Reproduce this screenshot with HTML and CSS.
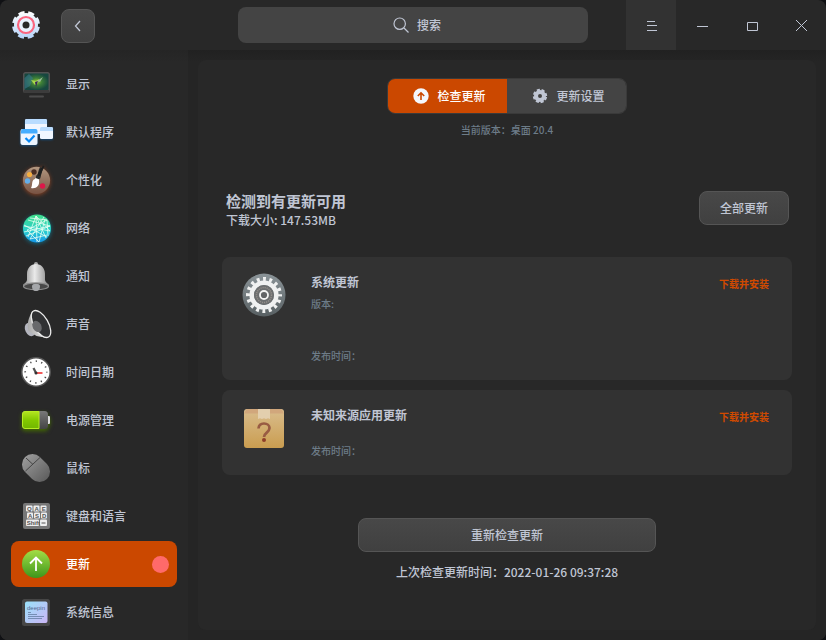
FILE: index.html
```html
<!DOCTYPE html>
<html lang="zh-CN">
<head>
<meta charset="utf-8">
<meta name="viewport" content="width=device-width, initial-scale=1">
<title>控制中心</title>
<link rel="stylesheet" href="styles.css">
</head>
<body>
<div class="window">
  <header class="titlebar">
    <div class="titlebar-start">
      <svg class="logo" viewBox="0 0 28 28" aria-hidden="true">
        <defs><linearGradient id="lg" gradientUnits="userSpaceOnUse" x1="0" y1="0" x2="0" y2="28"><stop stop-color="#fff"/><stop offset="1" stop-color="#b4d4fa"/></linearGradient></defs>
        <circle cx="14" cy="14" r="12" fill="url(#lg)"/>
        <circle cx="14" cy="14" r="12.300" fill="none" stroke="url(#lg)" stroke-width="3.400" stroke-dasharray="6 3.660" stroke-dashoffset="-1.830"/>
        <circle cx="14" cy="14" r="8" fill="#eaf2ff" stroke="#fa6680" stroke-width="2.200"/>
        <circle cx="14" cy="14" r="3.500" fill="#282828"/>
      </svg>
      <button class="btn back" type="button" aria-label="返回">
        <svg width="16" height="16" viewBox="0 0 16 16"><path d="M10 3 5.500 8 10 13" fill="none" stroke="#c0c6d4" stroke-width="1.300"/></svg>
      </button>
    </div>
    <label class="search">
      <svg width="16" height="16" viewBox="0 0 16 16" fill="none" stroke="#c0c6d4" stroke-width="1.200"><circle cx="6.700" cy="6.700" r="5.700"/><path d="m11 11 4.500 4.500"/></svg>
      <input type="text" placeholder="搜索" aria-label="搜索">
    </label>
    <div class="controls">
      <button class="control active" type="button" aria-label="菜单"><svg width="14" height="14" viewBox="-2 -2 14 14"><path d="M1 1.500h8M1 5.500h10M1 10.500h10"/></svg></button>
      <button class="control" type="button" aria-label="最小化"><svg width="14" height="14" viewBox="-2 -2 14 14"><path d="M1 6.500h11"/></svg></button>
      <button class="control" type="button" aria-label="最大化"><svg width="14" height="14" viewBox="-2 -2 14 14"><path d="M1.500 2.500h10v8h-10z"/></svg></button>
      <button class="control" type="button" aria-label="关闭"><svg width="14" height="14" viewBox="-2 -2 14 14"><path d="m0 0 11 11m0-11-11 11"/></svg></button>
    </div>
  </header>

  <div class="body">
    <nav class="sidebar">
      <a class="item" href="#display">
        <svg class="icon" viewBox="0 0 36 36">
          <defs><radialGradient id="scr"><stop stop-color="#9cc934"/><stop offset=".45" stop-color="#3b7d38"/><stop offset="1" stop-color="#17473f"/></radialGradient></defs>
          <rect x="5" y="6" width="27" height="21" rx="2.500" fill="#525252"/><rect x="5.500" y="24" width="26" height="3" rx="1" fill="#3c3c3c"/>
          <rect x="6.500" y="7.500" width="24" height="16.500" rx="1" fill="url(#scr)"/><path d="M6.500 12 11 8l4 4-3 8-5.500 3z" fill="#397b8c" opacity=".6"/>
          <path d="m13 14 5 1 3-2-1 4-3 2z" fill="#a9d84c"/><path d="m17 16 3-1-2 6z" fill="#36265b"/><path d="m19 15 6-4-3 5z" fill="#9bbb9d"/>
          <path d="M12 30.500h13" stroke="#4c4c4c" stroke-width="2" stroke-linecap="round"/>
        </svg>
        <span>显示</span></a>
      <a class="item" href="#apps">
        <svg class="icon glow-soft" viewBox="0 0 36 36">
          <rect x="7" y="5" width="22" height="15" rx="1.500" fill="#f1f6ff"/><path d="M7 10V6.500Q7 5 8.500 5h19Q29 5 29 6.500V10z" fill="#b9dcff"/>
          <rect x="22" y="13" width="13" height="12" rx="1.500" fill="#f1f6ff"/><path d="M22 17v-2.500q0-1.500 1.500-1.500h10q1.500 0 1.500 1.500V17z" fill="#b9dcff"/>
          <rect x="2.500" y="15" width="17" height="16" rx="2" fill="#edf5ff"/><path d="M3 19.500V17q0-2 2-2h12.500q2 0 2 2v2.500z" fill="#45adff"/>
          <path d="m7.500 24 3.500 3.500 5.500-6" fill="none" stroke="#0788f5" stroke-width="2.200"/>
        </svg>
        <span>默认程序</span></a>
      <a class="item" href="#personal">
        <svg class="icon glow-brown" viewBox="0 0 36 36">
          <defs><linearGradient id="pal" x2="0" y2="1"><stop stop-color="#b29780"/><stop offset="1" stop-color="#785343"/></linearGradient></defs>
          <circle cx="18.500" cy="18.300" r="13.600" fill="url(#pal)"/><path d="M20 17q-1-6 2-12l3 1-3 11z" fill="#282828"/>
          <circle cx="16" cy="10" r="2.700" fill="#4b2d22"/><circle cx="11.500" cy="12.500" r="2.600" fill="#f6ae3f"/><circle cx="9.500" cy="19" r="2.700" fill="#64aeea"/><circle cx="24.500" cy="24" r="2.700" fill="#de1749"/>
          <path d="m18.500 14 3 1.500 2.500-6 2.500-5-1.500-1-3 4.500z" fill="#1f1f1f"/><path d="m18.500 13.500 3.500 1.500-1 3c1 6-3 9-8 8 2-3 0-8 4-9z" fill="#fff"/><path d="m18.500 13 4 1.500-1 3-4-1.500z" fill="#292929"/>
        </svg>
        <span>个性化</span></a>
      <a class="item" href="#network">
        <svg class="icon glow-blue" viewBox="0 0 36 36">
          <defs><linearGradient id="net" x2="0" y2="1"><stop stop-color="#3fe08a"/><stop offset=".6" stop-color="#28cdd0"/><stop offset="1" stop-color="#1595e8"/></linearGradient></defs>
          <circle cx="19" cy="18.500" r="14" fill="url(#net)"/>
          <path d="m18 6-8 21M18 6l10 22M18 6l1 26M6 15l23 12M6 22l26-6M10 10l22 6-24 10M29 10 9 20l12 12 6-23M18 6l14 15-26-5M26 7 12 29l17-4M12 8l17 2 1 16" fill="none" stroke="#e4fff3" stroke-width=".8"/>
        </svg>
        <span>网络</span></a>
      <a class="item" href="#notify">
        <svg class="icon" viewBox="0 0 36 36">
          <defs><linearGradient id="bell"><stop stop-color="#8e8e8e"/><stop offset=".45" stop-color="#eaeaea"/><stop offset="1" stop-color="#858585"/></linearGradient></defs>
          <circle cx="18" cy="6" r="2" fill="#aaa"/>
          <path d="M5 28c0-3 3-2 4-6V16c0-6 4-10 9-10s9 4 9 10v6c1 4 4 3 4 6z" fill="url(#bell)"/>
          <ellipse cx="18" cy="28.300" rx="12.500" ry="3.400" fill="#484848" stroke="#8c8c8c" stroke-width="1.200"/><path d="M14 28c0-3 8-3 8 0s-1 5-4 5-4-2-4-5z" fill="#a5a7aa"/>
        </svg>
        <span>通知</span></a>
      <a class="item" href="#sound">
        <svg class="icon" viewBox="0 0 36 36">
          <defs><linearGradient id="spk"><stop stop-color="#aaa"/><stop offset="1" stop-color="#eee"/></linearGradient></defs>
          <ellipse cx="12" cy="23.500" rx="4.800" ry="7" transform="rotate(-25 12 23.500)" fill="#b4b5be"/><path d="M14.500 5c-4 7-6 13-4 20l8 5 11 2z" fill="url(#spk)"/>
          <ellipse cx="23" cy="18" rx="7.200" ry="15" transform="rotate(-30 23 18)" fill="#303133" stroke="#ececec" stroke-width="1.300"/>
          <ellipse cx="19" cy="20.500" rx="4.300" ry="6" transform="rotate(-30 19 20.500)" fill="#68696c"/>
        </svg>
        <span>声音</span></a>
      <a class="item" href="#time">
        <svg class="icon" viewBox="0 0 36 36">
          <circle cx="18" cy="18" r="14.200" fill="#fff" stroke="#555" stroke-width="1.500"/>
          <circle cx="18" cy="18" r="10.800" fill="none" stroke="#444" stroke-width="1.700" stroke-dasharray="1.200 4.455" stroke-dashoffset=".6"/>
          <path d="m15.500 14 2.500 5" stroke="#555" stroke-width="2.200"/><path d="M18 19h6.500" stroke="#f35a5a" stroke-width="2"/><circle cx="18" cy="19" r="1.500" fill="#333"/>
        </svg>
        <span>时间日期</span></a>
      <a class="item" href="#power">
        <svg class="icon glow-green" viewBox="0 0 36 36">
          <defs><linearGradient id="bat" x2="0" y2="1"><stop stop-color="#b3e521"/><stop offset=".5" stop-color="#83c900"/><stop offset="1" stop-color="#71b600"/></linearGradient><linearGradient id="shell" x2="0" y2="1"><stop stop-color="#797979"/><stop offset="1" stop-color="#444"/></linearGradient></defs>
          <rect x="4" y="9" width="26" height="18" rx="3.500" fill="url(#shell)"/><path d="M21 9.500H7Q4.500 9.500 4.500 12v12q0 2.500 2.500 2.500h14z" fill="url(#bat)" stroke="#b7ed23"/>
          <path d="M30 14h1q1 0 1 1v6q0 1-1 1h-1z" fill="#ddd"/>
        </svg>
        <span>电源管理</span></a>
      <a class="item" href="#mouse">
        <svg class="icon" viewBox="0 0 36 36">
          <defs><linearGradient id="mou" x2="0" y2="1"><stop stop-color="#999"/><stop offset="1" stop-color="#606060"/></linearGradient></defs>
          <rect x="7.500" y="2.500" width="21" height="31" rx="10.500" transform="rotate(-45 18 18)" fill="url(#mou)"/>
          <path d="M7.500 21 22 7.500M8 8l7 6.500" fill="none" stroke="#444" stroke-width="1"/>
        </svg>
        <span>鼠标</span></a>
      <a class="item" href="#keyboard">
        <svg class="icon" viewBox="0 0 36 36">
          <rect x="5" y="5" width="27" height="26" rx="2" fill="#777"/>
          <g fill="#eee"><rect x="8" y="7.500" width="6.500" height="6" rx="1"/><rect x="15.500" y="7.500" width="6" height="6" rx="1"/><rect x="22.500" y="7.500" width="6" height="6" rx="1"/><rect x="9" y="14.500" width="6" height="6" rx="1"/><rect x="16" y="14.500" width="6" height="6" rx="1"/><rect x="23" y="14.500" width="6" height="6" rx="1"/><rect x="8" y="21.500" width="13" height="6.500" rx="1"/><rect x="22" y="21.500" width="7" height="6.500" rx="1"/></g>
          <g class="keys"><text x="9" y="12.700">Q</text><text x="16.500" y="12.700">A</text><text x="23.700" y="12.700">E</text><text x="10" y="19.700">A</text><text x="17" y="19.700">S</text><text x="24" y="19.700">D</text><text x="8.700" y="27">Shift</text></g><path d="M23.500 25h4" stroke="#555"/>
        </svg>
        <span>键盘和语言</span></a>
      <a class="item current" href="#update" aria-current="page">
        <svg class="icon" viewBox="0 0 36 36">
          <defs><linearGradient id="upd" x2="0" y2="1"><stop stop-color="#a3dd45"/><stop offset="1" stop-color="#3d961b"/></linearGradient></defs>
          <circle cx="18" cy="18" r="14" fill="url(#upd)"/><path d="M18 25V12m-6 5.500 6-6 6 6" fill="none" stroke="#fff" stroke-width="1.800"/>
        </svg>
        <span>更新</span><i class="dot"></i></a>
      <a class="item" href="#info">
        <svg class="icon" viewBox="0 0 36 36">
          <defs><linearGradient id="inf" x2="1" y2="1"><stop stop-color="#9ae1fa"/><stop offset="1" stop-color="#cbb5f5"/></linearGradient></defs>
          <rect x="4" y="5" width="28" height="27" rx="2.500" fill="#464646"/><rect x="7" y="7.500" width="22.500" height="21.500" rx="2" fill="url(#inf)"/>
          <text class="chip" x="9" y="15.500">deepin</text><path d="M10 18.500h3M10 20.500h9M10 22.500h16M10 24.500h14" stroke="#667da2" stroke-width=".8"/>
        </svg>
        <span>系统信息</span></a>
    </nav>

    <main class="main">
      <section class="panel">
        <div class="tabs">
          <button class="tab selected" type="button"><svg width="16" height="16" viewBox="0 0 16 16"><circle cx="8" cy="8" r="7.700" fill="#f4f7fd"/><path d="M8 12V5M4.800 8 8 4.800 11.200 8" fill="none" stroke="#cb4800" stroke-width="1.600"/></svg>检查更新</button>
          <button class="tab" type="button"><svg width="16" height="16" viewBox="0 0 16 16" fill="none" stroke="#c0c6d4"><circle cx="8" cy="8" r="4" stroke-width="4"/><circle cx="8" cy="8" r="6" stroke-width="2.400" stroke-dasharray="3 1.710" stroke-dashoffset="-.860"/></svg>更新设置</button>
        </div>
        <p class="version">当前版本：桌面 20.4</p>

        <div class="summary">
          <div>
            <h1>检测到有更新可用</h1>
            <p>下载大小: 147.53MB</p>
          </div>
          <button class="btn update-all" type="button">全部更新</button>
        </div>

        <article class="card">
          <svg class="card-icon" viewBox="0 0 48 48">
            <defs><linearGradient id="sys" gradientUnits="userSpaceOnUse" x1="0" y1="3" x2="0" y2="45"><stop stop-color="#8a9397"/><stop offset="1" stop-color="#596164"/></linearGradient></defs>
            <circle cx="24" cy="24" r="21.500" fill="url(#sys)"/>
            <circle cx="24" cy="24" r="12.300" fill="none" stroke="#f0f1f1" stroke-width="4.600"/>
            <circle cx="24" cy="24" r="16" fill="none" stroke="#f0f1f1" stroke-width="4" stroke-dasharray="2.900 3.383" stroke-dashoffset="1.450"/>
            <circle cx="24" cy="24" r="10" fill="#6c6e6f"/>
            <circle cx="24" cy="24" r="7.500" fill="none" stroke="#918d89" stroke-width="1.500" stroke-dasharray="1.200 .9"/>
            <circle cx="24" cy="24" r="4" fill="#626466" stroke="#f3f3f3" stroke-width="1.800"/>
          </svg>
          <div class="info">
            <h2>系统更新</h2>
            <p>版本:</p>
            <p class="date-far">发布时间：</p>
          </div>
          <a class="install" href="#install-system">下载并安装</a>
        </article>

        <article class="card">
          <svg class="card-icon" viewBox="0 0 48 48">
            <defs><linearGradient id="box" x2="0" y2="1"><stop stop-color="#d9bd8d"/><stop offset="1" stop-color="#ca9d50"/></linearGradient></defs>
            <rect x="4" y="5" width="40" height="39" rx="3" fill="url(#box)"/><path d="M4 9.500 6 6q.5-1 2-1h32q1.500 0 2 1l2 3.500z" fill="#d1a77c"/>
            <path d="M18 5h12v10l-2-.8-2 .8-2-.8-2 .8-2-.8-2 .8z" fill="#e3cfae"/>
            <path d="M18.500 24.500c.3-3.500 2.500-5 5.500-5s5.500 1.700 5.500 4.600c0 4.700-5.500 4.300-5.500 9" fill="none" stroke="#985b43" stroke-width="2.700"/><circle cx="24" cy="36" r="2" fill="#8e3e29"/>
          </svg>
          <div class="info">
            <h2>未知来源应用更新</h2>
            <p class="date-near">发布时间：</p>
          </div>
          <a class="install" href="#install-unknown">下载并安装</a>
        </article>

        <button class="btn recheck" type="button">重新检查更新</button>
        <p class="last">上次检查更新时间：2022-01-26 09:37:28</p>
      </section>
    </main>
  </div>
</div>
</body>
</html>
```
FILE: styles.css
```css
* { box-sizing: border-box; }

body {
  margin: 0;
  background: #101114;
  color: #c0c6d4;
  font: 500 12px/18px "Noto Sans CJK SC", sans-serif;
}

h1, h2, p { margin: 0; }
button, input { font: inherit; color: inherit; }
a { color: inherit; text-decoration: none; }
svg { display: block; flex: none; }

.window {
  display: flex;
  flex-direction: column;
  min-height: 100vh;
  border-radius: 8px;
  overflow: hidden;
  background: #282828;
}

/* Title bar */
.titlebar {
  display: grid;
  grid-template-columns: 1fr minmax(120px, 350px) 1fr;
  align-items: center;
  height: 50px;
}

.titlebar-start {
  display: flex;
  align-items: center;
  gap: 21px;
  padding-left: 12px;
}

.logo { width: 28px; height: 28px; }

.btn {
  display: flex;
  align-items: center;
  justify-content: center;
  height: 34px;
  padding: 0;
  border: 1px solid #555;
  border-radius: 8px;
  background: linear-gradient(#484848, #404040);
}

.back { width: 34px; margin-top: 2px; }

.search {
  display: flex;
  align-items: center;
  justify-content: center;
  gap: 8px;
  height: 36px;
  padding-left: 8px;
  border-radius: 8px;
  background: #444;
}

.search input {
  field-sizing: content;
  min-width: 2em;
  padding: 0;
  border: 0;
  outline: 0;
  background: none;
}

.search input::placeholder { color: #c0c6d4; opacity: 1; }

.controls { display: flex; justify-content: flex-end; }

.control {
  display: grid;
  place-items: center;
  width: 50px;
  height: 50px;
  padding: 0;
  border: 0;
  background: none;
}

.control.active { background: #323232; }
.control svg { fill: none; stroke: #c0c6d4; stroke-width: 1px; }

/* Sidebar */
.body { display: flex; flex: 1; }

.sidebar {
  display: flex;
  flex: none;
  flex-direction: column;
  gap: 2px;
  width: 188px;
  padding: 11px 11px 5px;
  background: linear-gradient(#252525, #282828 12px);
}

.item {
  display: flex;
  align-items: center;
  gap: 12px;
  height: 46px;
  padding: 0 8px 0 7px;
  border-radius: 8px;
}

.item.current { background: #cb4800; color: #fff; }
.icon { width: 36px; height: 36px; }
.glow-soft { filter: drop-shadow(0 1px 1px #164a78); }
.glow-brown { filter: drop-shadow(0 1px 2px #8a4324); }
.glow-blue { filter: drop-shadow(0 1px 2px #146b83); }
.glow-green { filter: drop-shadow(0 2px 2px #446b00); }
.keys { font: 700 6px "Liberation Sans", sans-serif; fill: #555; }
.chip { font: 400 6px "Liberation Sans", sans-serif; fill: #526a91; }

.dot {
  width: 17px;
  height: 17px;
  margin-left: auto;
  border-radius: 50%;
  background: #ff6a6a;
}

/* Content */
.main {
  display: flex;
  flex: 1;
  padding: 10px;
  background: linear-gradient(#212121, #252525 12px);
}

.panel {
  display: flex;
  flex: 1;
  flex-direction: column;
  padding: 18px 24px;
  border-radius: 8px;
  background: #282828;
}

.tabs {
  display: flex;
  align-self: center;
  border: 1px solid #3a3a3a;
  border-radius: 8px;
  overflow: hidden;
}

.tab {
  display: flex;
  align-items: center;
  justify-content: center;
  gap: 8px;
  width: 119px;
  height: 34px;
  padding: 0 0 0 4px;
  border: 0;
  background: #444;
}

.tab.selected { background: #cb4800; color: #fff; }

.version {
  margin-top: 8px;
  color: #6d7c88;
  font-size: 10px;
  line-height: 16px;
  text-align: center;
}

.summary {
  display: flex;
  align-items: flex-start;
  justify-content: space-between;
  margin: 53px 0 28px;
  padding: 0 3px 0 4px;
}

h1 { font-size: 15px; font-weight: 700; line-height: 20px; }
.update-all { width: 90px; }

.card {
  display: flex;
  align-items: flex-start;
  margin-bottom: 10px;
  padding: 16px 23px 16px 18px;
  border-radius: 8px;
  background: #323232;
}

.card-icon { width: 48px; height: 48px; margin-top: -2px; }
.info { flex: 1; padding-left: 23px; }
h2 { font-size: 12px; font-weight: 700; line-height: 18px; }

.info p {
  margin-top: 5px;
  color: #6d7c88;
  font-size: 10px;
  line-height: 16px;
}

.info .date-far { margin-top: 36px; }
.info .date-near { margin-top: 19px; }

.install {
  margin-top: 2px;
  color: #d04a00;
  font-size: 10px;
  font-weight: 700;
}

.recheck {
  align-self: center;
  width: 298px;
  max-width: 100%;
  margin-top: 33px;
}

.last { margin-top: 11px; text-align: center; }
```
